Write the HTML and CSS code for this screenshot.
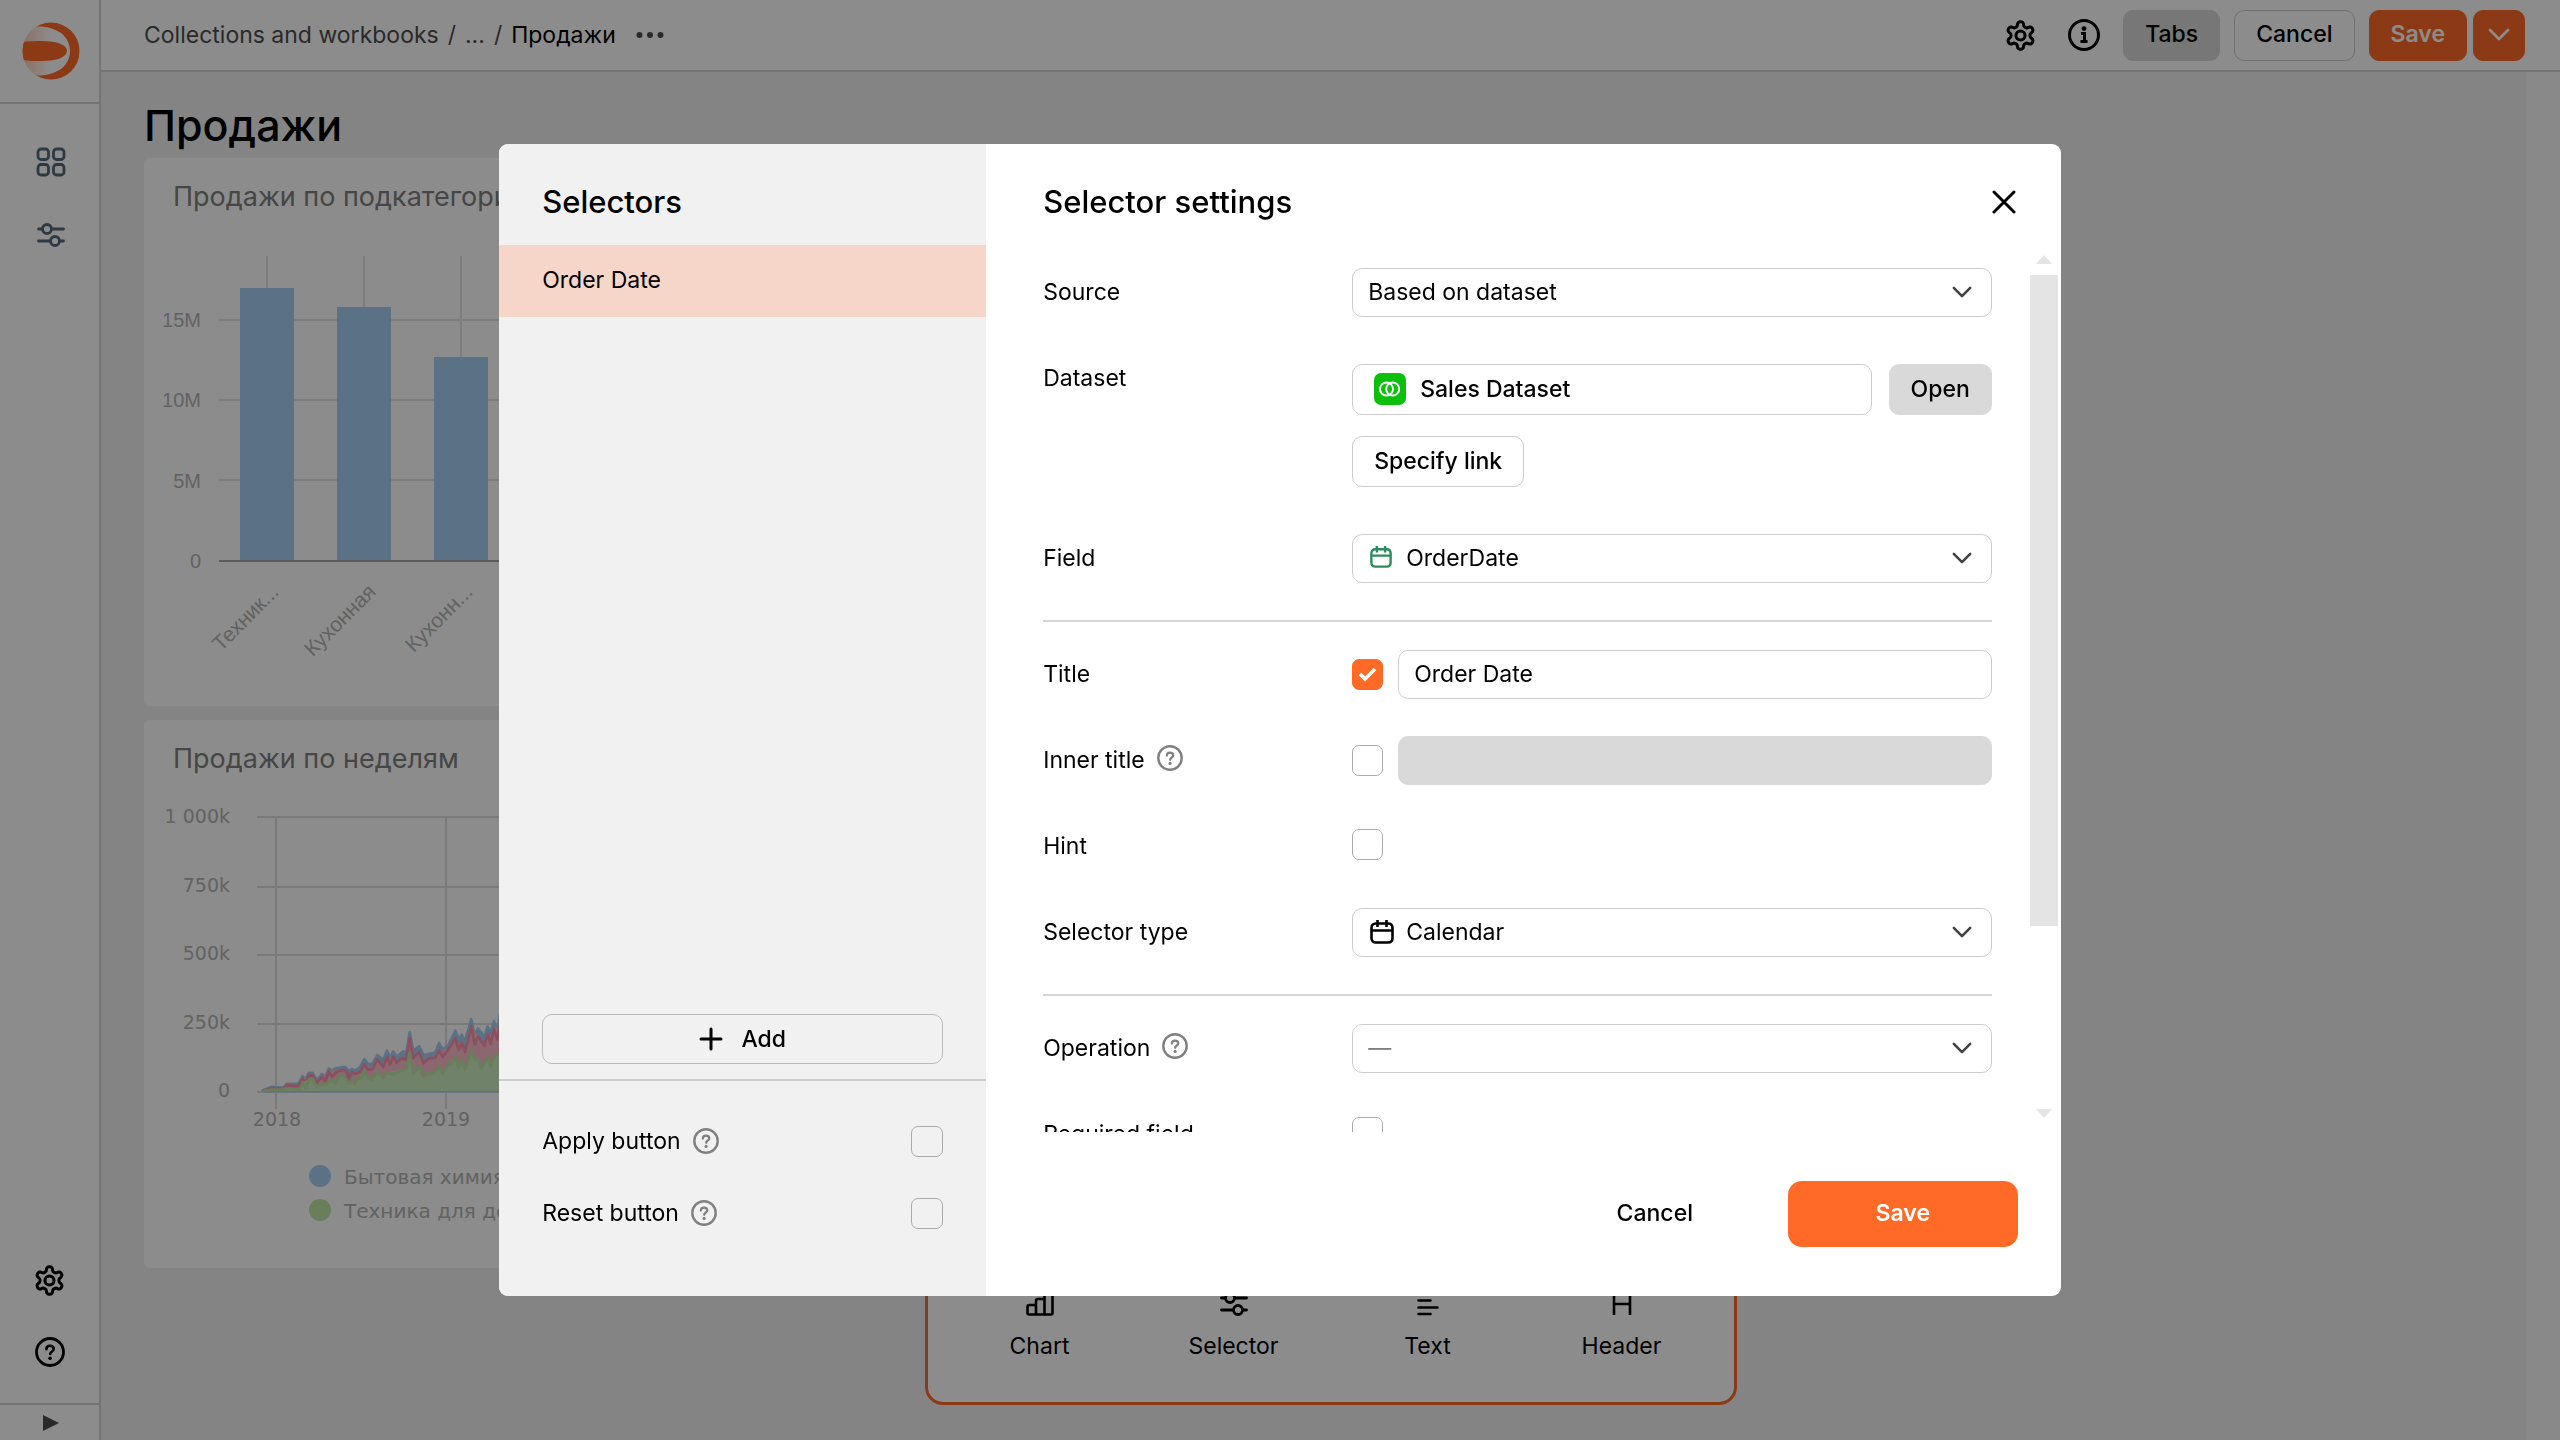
FILE: index.html
```html
<!DOCTYPE html>
<html lang="en">
<head>
<meta charset="utf-8">
<meta name="viewport" content="width=device-width, initial-scale=1">
<title>Продажи</title>
<link rel="stylesheet" href="styles.css">
</head>
<body>
<svg class="sprite" aria-hidden="true">
  <symbol id="gear" viewBox="0 0 24 24"><g fill="none" stroke="currentColor" stroke-width="2.2"><path d="M12.22 2h-.44a2 2 0 0 0-2 2v.18a2 2 0 0 1-1 1.73l-.43.25a2 2 0 0 1-2 0l-.15-.08a2 2 0 0 0-2.73.73l-.22.38a2 2 0 0 0 .73 2.73l.15.1a2 2 0 0 1 1 1.72v.51a2 2 0 0 1-1 1.74l-.15.09a2 2 0 0 0-.73 2.73l.22.38a2 2 0 0 0 2.73.73l.15-.08a2 2 0 0 1 2 0l.43.25a2 2 0 0 1 1 1.73V20a2 2 0 0 0 2 2h.44a2 2 0 0 0 2-2v-.18a2 2 0 0 1 1-1.73l.43-.25a2 2 0 0 1 2 0l.15.08a2 2 0 0 0 2.73-.73l.22-.39a2 2 0 0 0-.73-2.73l-.15-.08a2 2 0 0 1-1-1.74v-.5a2 2 0 0 1 1-1.74l.15-.09a2 2 0 0 0 .73-2.73l-.22-.38a2 2 0 0 0-2.73-.73l-.15.08a2 2 0 0 1-2 0l-.43-.25a2 2 0 0 1-1-1.73V4a2 2 0 0 0-2-2z"/><circle cx="12" cy="12" r="3.3"/></g></symbol>
  <symbol id="info" viewBox="0 0 32 32"><circle cx="16" cy="16" r="14.5" fill="none" stroke="currentColor" stroke-width="3"/><circle cx="16" cy="9.6" r="2.4" fill="currentColor"/><path d="M13 14.5h3.500v8M12.500 22.500h7" fill="none" stroke="currentColor" stroke-width="3"/></symbol>
  <symbol id="help" viewBox="0 0 28 28"><circle cx="14" cy="14" r="12.6" fill="none" stroke="currentColor" stroke-width="2.6"/><path d="M10.6 11.4c0-2 1.500-3.300 3.500-3.300s3.400 1.300 3.400 3.100c0 2.300-3.300 2.300-3.300 4.700" fill="none" stroke="currentColor" stroke-width="2.400" stroke-linecap="round"/><circle cx="14.100" cy="19.800" r="1.700" fill="currentColor"/></symbol>
  <symbol id="sliders" viewBox="0 0 28 24"><g fill="none" stroke="currentColor" stroke-width="2.800" stroke-linecap="round"><circle cx="10" cy="6" r="4.500"/><circle cx="18" cy="18" r="4.500"/><path d="M1.500 6h4M14.500 6h12M1.500 18h12M22.500 18h4"/></g></symbol>
  <symbol id="tiles" viewBox="0 0 30 30"><g fill="none" stroke="currentColor" stroke-width="2.800"><rect x="2" y="2" width="10.500" height="10.500" rx="3"/><rect x="17.500" y="2" width="10.500" height="10.500" rx="3"/><rect x="2" y="17.500" width="10.500" height="10.500" rx="3"/><rect x="17.500" y="17.500" width="10.500" height="10.500" rx="3"/></g></symbol>
  <symbol id="bars" viewBox="0 0 28 24"><path d="M1.500 21V15q0-2 2-2H10V9q0-2 2-2h6.500V3.500q0-2 2-2h4q2 0 2 2V21q0 1.500-1.500 1.500H3Q1.500 22.500 1.500 21zM10 13v9.500M18.500 7v15.500" fill="none" stroke="currentColor" stroke-width="2.600"/></symbol>
  <symbol id="lines" viewBox="0 0 22 24"><path d="M1.500 2h19M1.500 8.500h12M1.500 15.500h19M1.500 22h12" fill="none" stroke="currentColor" stroke-width="2.600" stroke-linecap="round"/></symbol>
  <symbol id="heading" viewBox="0 0 20 24"><path d="M2 1v22M18 1v22M2 12h16" fill="none" stroke="currentColor" stroke-width="2.600"/></symbol>
  <symbol id="chevron" viewBox="0 0 22 14"><path d="M2 2l9 9 9-9" fill="none" stroke="currentColor" stroke-width="2.800" stroke-linecap="round" stroke-linejoin="round"/></symbol>
  <symbol id="calendar" viewBox="0 0 24 24"><path d="M7.500 0v7M16.500 0v7M1.500 10.500h21M6 3.500h12q4.500 0 4.500 4.500V18q0 4.500-4.500 4.500H6Q1.500 22.500 1.500 18V8Q1.500 3.500 6 3.500z" fill="none" stroke="currentColor" stroke-width="2.600"/></symbol>
</svg>

<div class="app">
  <aside class="sidebar">
    <a class="logo" href="#" aria-label="Home">
      <svg width="58" height="58" viewBox="0 0 58 58">
        <defs>
          <linearGradient id="glow" x1="0" x2="1"><stop offset="0" stop-color="#ff6b27" stop-opacity=".35"/><stop offset=".5" stop-color="#ff6b27" stop-opacity="0"/></linearGradient>
          <clipPath id="disc"><circle cx="29" cy="29" r="28.500"/></clipPath>
        </defs>
        <circle cx="29" cy="29" r="28.500" fill="url(#glow)"/>
        <g clip-path="url(#disc)" fill="#ff6b27">
          <path d="M14 0H58V58H14V53.500C36 54 48 43 48 29S36 4 14 4.500z"/>
          <path d="M0 20C6 19 14 19 20 19c15 0 25 4 25 10s-10 10-25 10c-6 0-14 0-20-1z"/>
        </g>
      </svg>
    </a>
    <nav class="side-nav">
      <a href="#" aria-label="Collections"><svg width="30" height="30"><use href="#tiles"/></svg></a>
      <a href="#" aria-label="Settings list"><svg width="28" height="24"><use href="#sliders"/></svg></a>
    </nav>
    <div class="side-tools">
      <button type="button" aria-label="Settings"><svg width="33" height="33"><use href="#gear"/></svg></button>
      <button type="button" aria-label="Help"><svg width="30" height="30"><use href="#help"/></svg></button>
    </div>
    <button class="expand" type="button" aria-label="Expand"><svg width="18" height="18" viewBox="0 0 18 18"><path d="M1 1l16 8-16 8z" fill="#4d4d4d"/></svg></button>
  </aside>

  <div class="main">
    <header class="topbar">
      <nav class="crumbs">
        <a href="#">Collections and workbooks</a><span>/</span><a href="#">...</a><span>/</span><a class="current" href="#">Продажи</a>
      </nav>
      <button class="icon-btn more" type="button" aria-label="More"><svg width="28" height="8" viewBox="0 0 28 8"><g fill="#4d4d4d"><circle cx="3.500" cy="4" r="3"/><circle cx="14" cy="4" r="3"/><circle cx="24.500" cy="4" r="3"/></g></svg></button>
      <div class="actions">
        <button class="icon-btn" type="button" aria-label="Dashboard settings"><svg width="33" height="33"><use href="#gear"/></svg></button>
        <button class="icon-btn" type="button" aria-label="Information"><svg width="32" height="32"><use href="#info"/></svg></button>
        <button class="btn btn-gray" type="button">Tabs</button>
        <button class="btn" type="button">Cancel</button>
        <div class="split">
          <button class="btn btn-primary" type="button">Save</button>
          <button class="btn btn-primary btn-drop" type="button" aria-label="Save options"><svg width="22" height="14"><use href="#chevron"/></svg></button>
        </div>
      </div>
    </header>

    <div class="canvas">
      <main class="board">
        <h1>Продажи</h1>
        <section class="card">
          <h2>Продажи по подкатегориям</h2>
          <svg class="plot" width="400" height="460" viewBox="144 236 400 460">
            <g stroke="#e6e6e6" stroke-width="2"><path d="M219 320H544M219 400H544M219 480H544M267 256V560M364 256V560M461 256V560"/></g>
            <g fill="#a6cff5"><rect x="240" y="288" width="54" height="273"/><rect x="337" y="307" width="54" height="254"/><rect x="434" y="357" width="54" height="204"/></g>
            <path d="M219 561H544" stroke="#a8a8a8" stroke-width="2"/>
            <g class="axis axis-y"><text x="201" y="327">15M</text><text x="201" y="407">10M</text><text x="201" y="488">5M</text><text x="201" y="568">0</text></g>
            <g class="axis axis-y axis-tilted"><text transform="translate(280 593) rotate(-45)">Техник...</text><text transform="translate(377 593) rotate(-45)">Кухонная</text><text transform="translate(474 593) rotate(-45)">Кухонн...</text></g>
          </svg>
        </section>
        <section class="card">
          <h2>Продажи по неделям</h2>
          <svg class="plot" width="400" height="460" viewBox="144 798 400 460">
            <g stroke="#dedede" stroke-width="2"><path d="M257 817H544M257 887H544M257 955H544M257 1024H544M257 1092H544M276 817V1109M446 817V1109"/></g>
            <g transform="translate(0 700) scale(.33333 .37)" stroke-width="8" stroke-linejoin="round">
              <path fill="#a6cff5" stroke="#a6cff5" d="M788 1055L815 1046 850 1048 860 1038 895 1037 908 1017 917 1025 926 1008 938 1008 950 1028 966 1011 976 1020 986 996 996 1003 1006 996 1036 992 1046 1003 1056 998 1066 1002 1080 993 1093 971 1105 985 1118 982 1132 960 1150 972 1161 948 1170 968 1180 950 1190 965 1210 950 1219 955 1229 898 1240 948 1258 936 1270 960 1306 953 1317 928 1328 945 1345 933 1366 894 1376 918 1385 905 1395 922 1414 863 1424 905 1434 888 1453 910 1463 883 1472 900 1482 868 1492 895 1500 850 1500 1057 788 1057z"/>
              <path fill="#fdbdcb" stroke="none" d="M788 1057L850 1050 860 1040 895 1042 908 1022 938 1013 950 1033 986 1002 1030 997 1046 1025 1080 1003 1093 983 1118 995 1132 970 1150 990 1161 963 1190 978 1219 970 1229 912 1240 965 1258 950 1270 980 1306 965 1317 945 1345 943 1366 912 1395 950 1414 880 1434 908 1453 932 1482 888 1500 880 1500 1057z"/>
              <path fill="none" stroke="#fd93ae" d="M788 1057L815 1049 850 1051 860 1042 895 1043 908 1024 917 1034 926 1015 938 1015 950 1035 966 1019 976 1031 986 1004 996 1017 1010 1005 1030 999 1040 1005 1046 1025 1056 1006 1066 1010 1080 1005 1093 985 1105 1000 1118 997 1132 971 1150 992 1161 965 1170 985 1180 964 1190 980 1206 967 1219 972 1229 914 1240 967 1258 951 1270 982 1285 969 1306 967 1317 947 1328 965 1345 945 1366 914 1376 946 1385 927 1395 951 1414 882 1424 931 1434 910 1453 934 1463 904 1472 930 1482 890 1492 917 1500 880"/>
              <path fill="#cdedbf" stroke="none" d="M788 1057L860 1048 898 1052 908 1033 926 1025 938 1023 950 1045 986 1030 1006 1035 1020 1010 1046 1035 1064 1037 1093 1000 1115 1027 1132 1003 1150 1020 1161 1006 1219 995 1229 952 1240 1010 1258 990 1270 1018 1300 1010 1317 990 1328 1010 1345 982 1366 963 1376 995 1385 970 1395 998 1414 945 1444 995 1463 965 1472 990 1482 962 1500 955 1500 1057z"/>
              <path fill="none" stroke="#bfe6a6" d="M788 1057L820 1053 850 1055 860 1049 898 1053 908 1034 917 1050 926 1026 938 1024 950 1046 966 1037 976 1041 986 1031 996 1028 1006 1036 1020 1012 1036 1019 1046 1036 1056 1031 1064 1038 1074 1021 1083 1024 1093 1001 1103 1019 1115 1028 1132 1004 1150 1021 1161 1007 1175 1011 1200 1004 1219 996 1229 954 1240 1011 1258 991 1270 1019 1285 1008 1300 1011 1317 991 1328 1011 1345 983 1355 984 1366 964 1376 996 1385 971 1395 999 1414 946 1424 971 1434 969 1444 996 1463 966 1472 991 1482 963 1500 956"/>
            </g>
            <g class="axis axis-wide axis-y"><text x="230" y="823">1 000k</text><text x="230" y="892">750k</text><text x="230" y="960">500k</text><text x="230" y="1029">250k</text><text x="230" y="1097">0</text></g>
            <g class="axis axis-wide axis-x"><text x="277" y="1126">2018</text><text x="446" y="1126">2019</text></g>
            <circle cx="320" cy="1176" r="11" fill="#a6cff5"/><circle cx="320" cy="1210" r="11" fill="#bfe6a6"/>
            <g class="axis legend"><text x="344" y="1184">Бытовая химия</text><text x="344" y="1218">Техника для дома</text></g>
          </svg>
        </section>
      </main>
      <div class="gutter"></div>
    </div>

    <div class="widgets">
      <button type="button"><svg width="28" height="24"><use href="#bars"/></svg>Chart</button>
      <button type="button"><svg width="28" height="24"><use href="#sliders"/></svg>Selector</button>
      <button type="button"><svg width="22" height="24"><use href="#lines"/></svg>Text</button>
      <button type="button"><svg width="20" height="24"><use href="#heading"/></svg>Header</button>
    </div>
  </div>
</div>

<div class="overlay">
  <div class="modal" role="dialog" aria-modal="true" aria-labelledby="dialog-title">
    <section class="pane-list">
      <h3>Selectors</h3>
      <button class="item" type="button">Order Date</button>
      <div class="add-wrap"><button class="btn-add" type="button"><svg width="24" height="24" viewBox="0 0 24 24"><path d="M12 2v20M2 12h20" stroke="#000" stroke-width="3" stroke-linecap="round"/></svg>Add</button></div>
      <div class="options">
        <div class="option"><label for="apply">Apply button</label><svg class="hint" width="26" height="26"><use href="#help"/></svg><input id="apply" type="checkbox"></div>
        <div class="option"><label for="reset">Reset button</label><svg class="hint" width="26" height="26"><use href="#help"/></svg><input id="reset" type="checkbox"></div>
      </div>
    </section>

    <section class="pane-form">
      <header class="form-head">
        <h3 id="dialog-title">Selector settings</h3>
        <button class="icon-btn" type="button" aria-label="Close"><svg width="24" height="24" viewBox="0 0 24 24"><path d="M2 2l20 20M22 2L2 22" stroke="#000" stroke-width="3" stroke-linecap="round"/></svg></button>
      </header>
      <div class="scroller">
        <form class="fields">
          <div class="row">
            <label for="source">Source</label>
            <div class="select"><select id="source"><option>Based on dataset</option></select><svg class="arrow" width="20" height="13"><use href="#chevron"/></svg></div>
          </div>
          <div class="row">
            <span class="name">Dataset</span>
            <div class="dataset">
              <div class="line">
                <button class="dataset-btn" type="button"><svg width="32" height="32" viewBox="0 0 32 32"><rect width="32" height="32" rx="7" fill="#0cc00c"/><g fill="none" stroke="#fff" stroke-width="1.900"><circle cx="12.500" cy="16" r="6.500"/><circle cx="18.700" cy="16" r="6.500"/></g></svg>Sales Dataset</button>
                <button class="btn btn-gray" type="button">Open</button>
              </div>
              <button class="btn" type="button">Specify link</button>
            </div>
          </div>
          <div class="row">
            <label for="field">Field</label>
            <div class="select with-icon"><svg class="lead green" width="22" height="22"><use href="#calendar"/></svg><select id="field"><option>OrderDate</option></select><svg class="arrow" width="20" height="13"><use href="#chevron"/></svg></div>
          </div>
          <hr>
          <div class="row">
            <label for="title">Title</label>
            <div class="line"><input type="checkbox" aria-label="Show title" checked><input id="title" type="text" value="Order Date"></div>
          </div>
          <div class="row">
            <div class="name"><label for="inner">Inner title</label><svg class="hint" width="26" height="26"><use href="#help"/></svg></div>
            <div class="line"><input type="checkbox" aria-label="Show inner title"><input id="inner" type="text" disabled></div>
          </div>
          <div class="row">
            <label for="hint">Hint</label>
            <div class="line line-top"><input id="hint" type="checkbox"></div>
          </div>
          <div class="row">
            <label for="type">Selector type</label>
            <div class="select with-icon"><svg class="lead" width="24" height="24"><use href="#calendar"/></svg><select id="type"><option>Calendar</option></select><svg class="arrow" width="20" height="13"><use href="#chevron"/></svg></div>
          </div>
          <hr>
          <div class="row">
            <div class="name"><label for="operation">Operation</label><svg class="hint" width="26" height="26"><use href="#help"/></svg></div>
            <div class="select"><select id="operation" class="empty"><option>—</option></select><svg class="arrow" width="20" height="13"><use href="#chevron"/></svg></div>
          </div>
          <div class="row">
            <label for="required">Required field</label>
            <div class="line line-top"><input id="required" type="checkbox"></div>
          </div>
        </form>
        <div class="scrollbar" aria-hidden="true"><i class="up"></i><div class="track"><div class="thumb"></div></div><i class="down"></i></div>
      </div>
      <footer class="form-foot">
        <button class="btn-large" type="button">Cancel</button>
        <button class="btn-large primary" type="button">Save</button>
      </footer>
    </section>
  </div>
</div>
</body>
</html>
```
FILE: styles.css
```css
* { box-sizing: border-box; }
body { margin: 0; font: 400 23px/32px Inter, "Noto Sans", sans-serif; color: #000; overflow: hidden; }
button, input, select { font: inherit; color: inherit; margin: 0; }
button { background: none; border: 0; padding: 0; display: flex; align-items: center; justify-content: center; }
a { color: inherit; text-decoration: none; }
svg { display: block; flex: none; }
h1, h2, h3 { margin: 0; font-weight: 500; }
.sprite { position: absolute; width: 0; height: 0; }

.app { display: flex; height: 100vh; background: #f0f0f0; }

/* Sidebar */
.sidebar { width: 101px; flex: none; display: flex; flex-direction: column; background: #fff; border-right: 2px solid #d4d4d4; }
.logo { height: 104px; flex: none; display: flex; align-items: center; justify-content: center; padding-left: 3px; border-bottom: 2px solid #d4d4d4; }
.side-nav { display: flex; flex-direction: column; margin-top: 21px; color: #56697c; }
.side-nav a { height: 73px; padding-left: 2px; display: flex; align-items: center; justify-content: center; }
.side-tools { margin-top: auto; margin-bottom: 15px; }
.side-tools button { width: 100%; height: 72px; }
.expand { height: 37px; padding-left: 2px; border-top: 2px solid #d4d4d4; }

/* Header */
.main { flex: 1; min-width: 0; display: flex; flex-direction: column; position: relative; }
.topbar { height: 72px; flex: none; display: flex; align-items: center; padding: 0 35px 0 43px; background: #fff; border-bottom: 2px solid #d4d4d4; }
.crumbs { display: flex; gap: 9px; color: #4d4d4d; }
.crumbs .current { color: #000; }
.more { margin-left: 20px; }
.actions { margin-left: auto; display: flex; align-items: center; gap: 14px; }
.actions > .icon-btn { width: 50px; height: 50px; }
.split { display: flex; gap: 6px; }
.btn { height: 51px; padding: 0 21px 2px; border: 1px solid #ccc; border-radius: 10px; font-weight: 500; background: #fff; }
.btn-gray { background: #d9d9d9; border-color: #d9d9d9; }
.btn-primary { background: #ff6b27; border-color: #ff6b27; color: #fff; font-weight: 600; }
.btn-drop { padding: 0 14px; }

/* Dashboard */
.canvas { flex: 1; display: flex; min-height: 0; }
.board { flex: 1; padding: 28px 43px 0; }
.gutter { width: 34px; background: #fafafa; }
h1 { font-size: 43px; line-height: 50px; margin-bottom: 8px; }
.card { width: 40%; height: 548px; margin-bottom: 14px; border-radius: 6px; background: #fff; overflow: hidden; }
h2 { font-size: 27px; line-height: 36px; font-weight: 400; color: #808080; padding: 21px 29px; }
.axis { font-family: "Liberation Sans", sans-serif; font-size: 20px; fill: #b3b3b3; }
.axis-y { text-anchor: end; }
.axis-x { text-anchor: middle; }
.axis-tilted { font-size: 21px; }
.axis-wide { font-family: "DejaVu Sans", sans-serif; font-size: 19px; }
.legend { font-family: "DejaVu Sans", sans-serif; }

.widgets { position: absolute; left: 0; right: 0; bottom: 35px; margin: 0 auto; width: 812px; display: flex; padding: 20px 15px 40px; border: 3px solid #ff6b27; border-radius: 18px; background: #fff; }
.widgets button { flex: 1; flex-direction: column; gap: 14px; }

/* Dialog */
.overlay { position: fixed; inset: 0; display: flex; align-items: center; justify-content: center; background: rgba(0, 0, 0, .45); }
.modal { width: 61%; height: 80%; display: flex; border-radius: 9px; overflow: hidden; background: #fff; }
h3 { font-size: 31px; line-height: 36px; }

.pane-list { width: 487px; flex: none; display: flex; flex-direction: column; background: #f1f1f1; }
.pane-list h3 { padding: 40px 43px 25px; }
.item { height: 72px; justify-content: flex-start; padding: 0 43px 2px; background: #f5d6c8; }
.add-wrap { margin-top: auto; padding: 0 43px 15px; border-bottom: 2px solid #ccc; }
.btn-add { width: 100%; height: 50px; gap: 18px; border: 1px solid #bbb; border-radius: 10px; font-weight: 500; }
.options { padding: 24px 43px 47px; }
.option { height: 72px; display: flex; align-items: center; gap: 12px; }
.option input { margin-left: auto; }
.hint { color: #808080; }

input[type="checkbox"] { appearance: none; width: 31px; height: 31px; flex: none; border: 1px solid #aaa; border-radius: 7px; background: transparent center / 23px no-repeat; }
.option input[type="checkbox"] { width: 32px; }
input[type="checkbox"]:checked { border-color: #ff6b27; background-color: #ff6b27; background-image: url("data:image/svg+xml,%3Csvg xmlns='http://www.w3.org/2000/svg' viewBox='0 0 23 23'%3E%3Cpath d='M4 11l5 5L19 6' fill='none' stroke='white' stroke-width='3.600'/%3E%3C/svg%3E"); }

.pane-form { flex: 1; min-width: 0; display: flex; flex-direction: column; }
.form-head { height: 98px; flex: none; display: flex; align-items: center; justify-content: space-between; padding: 18px 45px 0 57px; }
.scroller { flex: 1; min-height: 0; display: flex; }
.fields { flex: 1; min-width: 0; padding: 26px 38px 0 57px; display: flex; flex-direction: column; gap: 37px; overflow: hidden; }
.row { flex: none; display: grid; grid-template-columns: 309px 1fr; align-items: start; }
.row > label, .name { display: flex; align-items: center; gap: 12px; height: 48px; }
.name .hint { margin-bottom: 4px; }
.line { display: flex; align-items: center; gap: 15px; }
.line-top { height: 49px; align-items: flex-start; padding-top: 7px; }
.fields hr { flex: none; width: 100%; height: 2px; margin: 0 0 -9px; border: 0; background: #d4d4d4; }
.dataset { display: flex; flex-direction: column; align-items: flex-start; gap: 21px; padding: 10px 0; }
.dataset .line { width: 100%; gap: 17px; }
.dataset-btn { flex: 1; height: 51px; justify-content: flex-start; gap: 14px; padding: 0 21px 1px; border: 1px solid #ccc; border-radius: 10px; font-weight: 500; }
.select { position: relative; color: #000; }
select, input[type="text"] { width: 100%; min-width: 0; height: 49px; padding: 0 15px 2px; border: 1px solid #ccc; border-radius: 10px; background: #fff; appearance: none; }
input[type="text"]:disabled { background: #d9d9d9; border-color: #d9d9d9; }
.empty { color: #808080; }
.with-icon select { padding-left: 53px; }
.arrow { position: absolute; right: 20px; top: 18px; color: #404040; }
.lead { position: absolute; left: 18px; top: 12px; }
.green { color: #2d8a5c; }

.scrollbar { width: 31px; flex: none; padding-right: 3px; display: flex; flex-direction: column; align-items: center; }
.scrollbar i { border: 8px solid transparent; }
.scrollbar .up { margin: 5px 0 11px; border-bottom: 9px solid #e4e4e4; }
.scrollbar .down { margin: 10px 0 6px; border-top: 9px solid #e4e4e4; }
.track { flex: 1; width: 28px; }
.thumb { height: 79%; background: #e4e4e4; }

.form-foot { flex: none; display: flex; justify-content: flex-end; gap: 18px; padding: 49px 43px; }
.btn-large { width: 230px; height: 66px; padding-bottom: 2px; border-radius: 14px; font-weight: 500; }
.primary { background: #ff6b27; color: #fff; font-weight: 600; }
```
